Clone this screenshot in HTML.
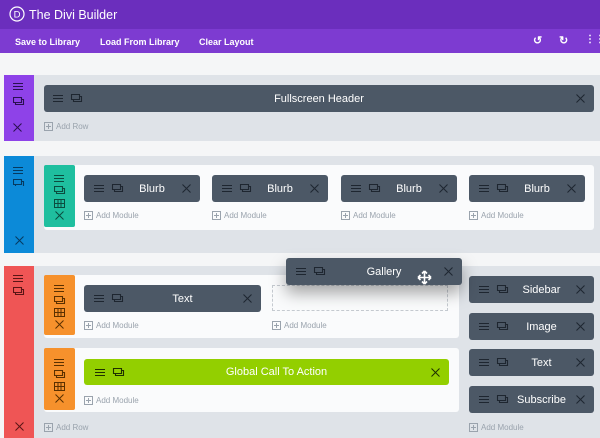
<!DOCTYPE html>
<html><head><meta charset="utf-8"><style>
*{margin:0;padding:0;box-sizing:border-box}
body{width:600px;height:438px;overflow:hidden;background:#f5f6f7;font-family:"Liberation Sans",sans-serif;position:relative}
.a{position:absolute}
.hdr{left:0;top:0;width:600px;height:29px;background:#6b2ebd;color:#fff;font-size:12.5px}
.tb{left:0;top:29px;width:600px;height:24px;background:#7d3bd1;color:#fff;font-size:9px;font-weight:bold}
.gray{background:#dfe3e8}
.white{background:#fafbfc;border-radius:3px}
.mod{background:#4c5866;border-radius:3px;color:#fff;font-size:11px;text-align:center}
.mod .t{position:absolute;left:0;right:0;top:50%;transform:translateY(-50%);padding-left:20px}
.ic{position:absolute}
.add{position:absolute;font-size:8px;color:#9aa3ad;display:flex;align-items:center;gap:3px}
.add i{display:inline-block;width:9px;height:9px;border:1px solid #9aa3ad;position:relative}
.add i:before{content:"";position:absolute;left:1px;right:1px;top:3px;height:1px;background:#9aa3ad}
.add i:after{content:"";position:absolute;top:1px;bottom:1px;left:3px;width:1px;background:#9aa3ad}
</style></head><body>
<svg width="0" height="0" style="position:absolute"><defs>
<g id="ham"><path d="M0 1.5H10M0 4.5H10M0 7.5H10" stroke-width="1.1" fill="none"/></g>
<g id="dup"><path d="M0.5 0.5H8.5V5.5H0.5Z M2.5 5.5V7.5H10.5V2.5H8.5" stroke-width="1.1" fill="none"/></g>
<g id="x"><path d="M0.5 0.5L8.5 8.5M8.5 0.5L0.5 8.5" stroke-width="1" fill="none"/></g>
<g id="col"><path d="M0.5 0.5H10.5V8.5H0.5ZM0.5 4.5H10.5M4 0.5V8.5M7 0.5V8.5" stroke-width="1" fill="none"/></g>
</defs></svg>

<div class="a hdr"><svg class="ic" style="left:9px;top:6px" width="16" height="16"><circle cx="8" cy="8" r="7" stroke="#fff" stroke-width="1.2" fill="none"/><text x="8" y="11.5" font-size="9.5" fill="#fff" text-anchor="middle" font-family="Liberation Sans">D</text></svg><span class="a" style="left:29px;top:8px">The Divi Builder</span></div>
<div class="a tb"><span class="a" style="left:15px;top:8px">Save to Library</span><span class="a" style="left:100px;top:8px">Load From Library</span><span class="a" style="left:199px;top:8px">Clear Layout</span>
<span class="a" style="left:533px;top:5px;font-size:11px">↺</span><span class="a" style="left:559px;top:5px;font-size:11px">↻</span><span class="a" style="left:585px;top:5px;font-size:10px">⋮⋮</span></div>

<!-- section 1 -->
<div class="a gray" style="left:34px;top:75px;width:566px;height:66px"></div>
<div class="a" style="left:4px;top:75px;width:30px;height:66px;background:#8e42e8"></div>
<svg class="ic" style="left:13px;top:82px" width="12" height="58" stroke="#2a1050"><use href="#ham"/><use href="#dup" y="15"/><use href="#x" y="41"/></svg>
<div class="a mod" style="left:44px;top:85px;width:550px;height:27px"><span class="t" style="padding-left:0">Fullscreen Header</span></div>
<svg class="ic" style="left:53px;top:94px" width="30" height="10" stroke="#1e2630"><use href="#ham"/><use href="#dup" x="18"/></svg>
<svg class="ic" style="left:576px;top:94px" width="10" height="10" stroke="#1e2630"><use href="#x"/></svg>
<div class="add" style="left:44px;top:122px"><i></i>Add Row</div>

<!-- section 2 -->
<div class="a gray" style="left:34px;top:156px;width:566px;height:97px"></div>
<div class="a" style="left:4px;top:156px;width:30px;height:97px;background:#0c8ad8"></div>
<svg class="ic" style="left:13px;top:166px" width="12" height="20" stroke="#063a60"><use href="#ham"/><use href="#dup" y="13"/></svg>
<svg class="ic" style="left:15px;top:236px" width="10" height="10" stroke="#063a60"><use href="#x"/></svg>
<div class="a white" style="left:44px;top:165px;width:550px;height:65px"></div>
<div class="a" style="left:44px;top:165px;width:31px;height:62px;background:#1fbf9f;border-radius:2px"></div>
<svg class="ic" style="left:54px;top:174px" width="12" height="50" stroke="#0b4d3f"><use href="#ham"/><use href="#dup" y="12"/><use href="#col" y="25"/><use href="#x" x="1" y="37"/></svg>

<!-- section 3 -->
<div class="a gray" style="left:34px;top:266px;width:566px;height:172px"></div>
<div class="a" style="left:4px;top:266px;width:30px;height:172px;background:#ef5555"></div>
<svg class="ic" style="left:13px;top:274px" width="12" height="22" stroke="#5a1515"><use href="#ham"/><use href="#dup" y="13"/></svg>
<svg class="ic" style="left:15px;top:422px" width="10" height="10" stroke="#5a1515"><use href="#x"/></svg>
<div class="a white" style="left:44px;top:275px;width:415px;height:63px"></div>
<div class="a" style="left:44px;top:275px;width:31px;height:60px;background:#f6912c;border-radius:2px"></div>
<svg class="ic" style="left:54px;top:284px" width="12" height="50" stroke="#5a3000"><use href="#ham"/><use href="#dup" y="12"/><use href="#col" y="24"/><use href="#x" x="1" y="36"/></svg>
<div class="a white" style="left:44px;top:348px;width:415px;height:64px"></div>
<div class="a" style="left:44px;top:348px;width:31px;height:62px;background:#f6912c;border-radius:2px"></div>
<svg class="ic" style="left:54px;top:358px" width="12" height="50" stroke="#5a3000"><use href="#ham"/><use href="#dup" y="12"/><use href="#col" y="24"/><use href="#x" x="1" y="36"/></svg>
<div class="a" style="left:272px;top:285px;width:176px;height:26px;border:1px dashed #c5cad0"></div>
<div class="a mod" style="left:84px;top:359px;width:365px;height:26px;background:#93cf00"><span class="t">Global Call To Action</span></div>
<svg class="ic" style="left:95px;top:368px" width="30" height="10" stroke="#1e3000"><use href="#ham"/><use href="#dup" x="18"/></svg>
<svg class="ic" style="left:431px;top:368px" width="10" height="10" stroke="#1e3000"><use href="#x"/></svg>
<div class="add" style="left:84px;top:396px"><i></i>Add Module</div>
<div class="add" style="left:44px;top:423px"><i></i>Add Row</div>
<div class="add" style="left:84px;top:321px"><i></i>Add Module</div>
<div class="add" style="left:272px;top:321px"><i></i>Add Module</div>
<div class="add" style="left:469px;top:423px"><i></i>Add Module</div>

<div id="mods"></div>
<script>
var m=[[84,175,116,"Blurb"],[212,175,116,"Blurb"],[341,175,116,"Blurb"],[469,175,116,"Blurb"],[84,285,177,"Text"],[469,276,125,"Sidebar"],[469,313,125,"Image"],[469,349,125,"Text"],[469,386,125,"Subscribe"],[286,258,176,"Gallery"]];
var h="";
m.forEach(function(d,i){var sh=i==9?"box-shadow:0 8px 16px rgba(0,0,0,.35);":"";
h+='<div class="a mod" style="left:'+d[0]+'px;top:'+d[1]+'px;width:'+d[2]+'px;height:27px;'+sh+'"><span class="t">'+d[3]+'</span></div>';
h+='<svg class="ic" style="left:'+(d[0]+10)+'px;top:'+(d[1]+9)+'px" width="30" height="10" stroke="#1e2630"><use href="#ham"/><use href="#dup" x="18"/></svg>';
h+='<svg class="ic" style="left:'+(d[0]+d[2]-18)+'px;top:'+(d[1]+9)+'px" width="10" height="10" stroke="#1e2630"><use href="#x"/></svg>';
if(i<4)h+='<div class="add" style="left:'+d[0]+'px;top:'+(d[1]+36)+'px"><i></i>Add Module</div>';
});
document.getElementById("mods").innerHTML=h;
</script>
<svg class="ic" style="left:417px;top:270px" width="15" height="15"><path d="M7.5 1V14M1 7.5H14M7.5 1L5 3.5M7.5 1L10 3.5M7.5 14L5 11.5M7.5 14L10 11.5M1 7.5L3.5 5M1 7.5L3.5 10M14 7.5L11.5 5M14 7.5L11.5 10" stroke="#fff" stroke-width="1.6" fill="none"/></svg>
</body></html>
